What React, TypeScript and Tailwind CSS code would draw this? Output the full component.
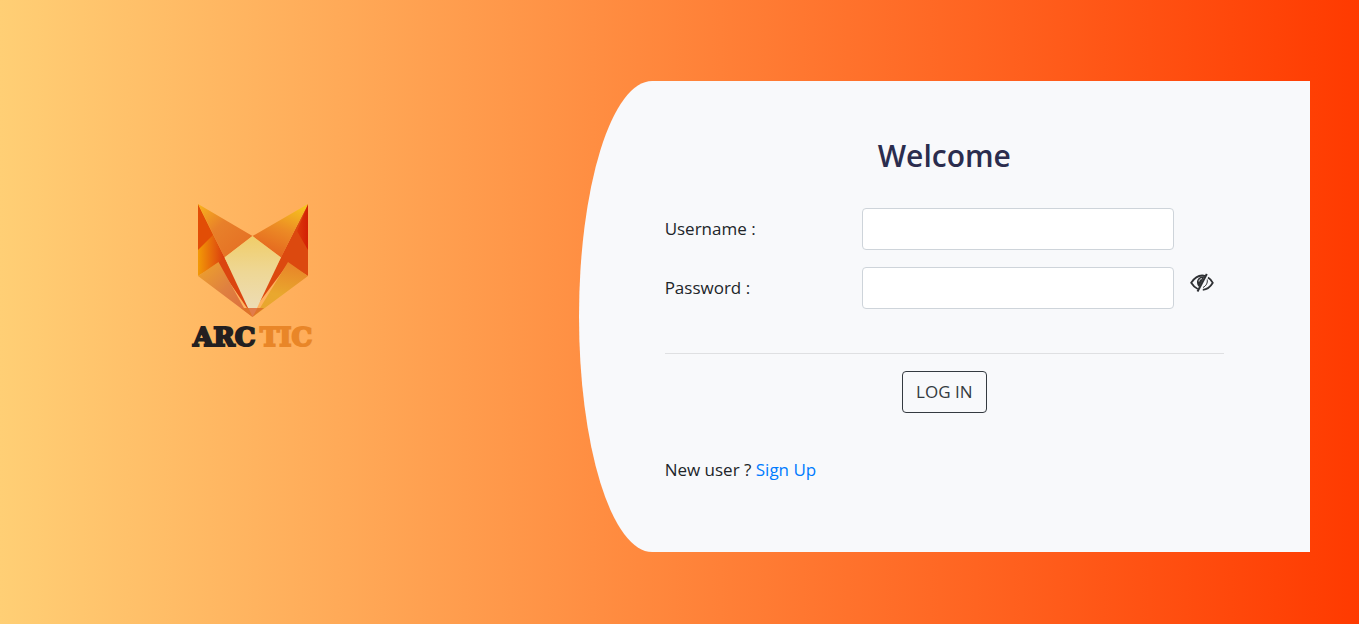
import { useState } from "react";

function FoxLogo() {
  return (
    <svg viewBox="-2 0 128 148" className="h-[148px] w-32" role="img" aria-label="Arctic">
      <defs>
        <linearGradient id="earLeft" x1="0" y1="0" x2="1" y2="1">
          <stop offset="0" stopColor="#f9b41c" />
          <stop offset="0.4" stopColor="#e8802a" />
          <stop offset="1" stopColor="#e46c22" />
        </linearGradient>
        <linearGradient id="earRight" x1="0.8" y1="0" x2="0.4" y2="1">
          <stop offset="0" stopColor="#f6c31e" />
          <stop offset="0.5" stopColor="#ec8a25" />
          <stop offset="1" stopColor="#e4641f" />
        </linearGradient>
        <linearGradient id="sideLeft" x1="0" y1="0" x2="1" y2="0">
          <stop offset="0" stopColor="#f39a06" />
          <stop offset="0.6" stopColor="#e4600c" />
          <stop offset="1" stopColor="#d93a0e" />
        </linearGradient>
        <linearGradient id="cheekLeft" x1="0" y1="0" x2="1" y2="1">
          <stop offset="0" stopColor="#efa52a" />
          <stop offset="0.5" stopColor="#df8040" />
          <stop offset="1" stopColor="#dc6a3c" />
        </linearGradient>
        <linearGradient id="cheekRight" x1="0.6" y1="0" x2="0.4" y2="1">
          <stop offset="0" stopColor="#e88428" />
          <stop offset="0.6" stopColor="#e9a82e" />
          <stop offset="1" stopColor="#e8a52e" />
        </linearGradient>
        <linearGradient id="face" x1="0" y1="0" x2="0" y2="1">
          <stop offset="0" stopColor="#f0cd68" />
          <stop offset="0.5" stopColor="#eed795" />
          <stop offset="1" stopColor="#eddcb4" />
        </linearGradient>
        <linearGradient id="redRight" x1="0" y1="0" x2="1" y2="0">
          <stop offset="0" stopColor="#dc3a0a" />
          <stop offset="1" stopColor="#d31f04" />
        </linearGradient>
      </defs>
      <path d="M7 0 34 54 27 60 7 72Z" fill="url(#sideLeft)" />
      <path d="M7 0 22 31 7 46Z" fill="#e24d06" />
      <path d="M7 0 61.500 32 33.500 53.500Z" fill="url(#earLeft)" />
      <path d="M33.500 53.500 26 60 56 104 60 104Z" fill="#db4510" />
      <path d="M7 72 27.500 58 53 104 61.500 113Z" fill="url(#cheekLeft)" />
      <path d="M117 0 90 53 64 104 97 60 117 72Z" fill="#dc490f" />
      <path d="M117 0 106 27 117 46Z" fill="url(#redRight)" />
      <path d="M117 0 61.500 32 90 53.500Z" fill="url(#earRight)" />
      <path d="M97 58 117 72 61.500 113 69 104Z" fill="url(#cheekRight)" />
      <path d="M61.500 32 90 53.500 66 104H57L33.500 53.500Z" fill="url(#face)" />
      <path d="M50 104H73L61.500 113Z" fill="#df7429" />
      <path d="M57.500 104H66.500L61.500 113Z" fill="#e27c4a" />
      <g fontFamily="'DejaVu Serif', serif" fontWeight="700" fontSize="26" strokeWidth="2">
        <text x="2" y="142" fill="#231f20" stroke="#231f20">
          ARC
        </text>
        <text x="69" y="142" fill="#e98628" stroke="#e98628">
          TIC
        </text>
      </g>
    </svg>
  );
}

function HiddenEyeIcon() {
  return (
    <svg viewBox="0 0 24 20" className="h-5 w-6" fill="none" stroke="#2f3134" aria-hidden="true">
      <path d="M15.500 3C8.500 1 4 5.500 1.200 9.800 3 12.800 5 14.800 7.800 16" strokeWidth="1.800" />
      <path d="M18 4.500C20.200 5.800 21.600 7.500 22.800 9.800 20.500 13.800 17 16.500 12.800 16.800" strokeWidth="1.800" />
      <path d="M14.500 3.200C9.500 2.800 6.800 6 7 9.500 7.100 11.800 8 13.200 9.200 14Z" fill="#2f3134" stroke="none" />
      <path d="M9 8.500C9.200 6.800 10.200 5.800 11.800 5.600" stroke="#f8f9fb" strokeWidth="1" />
      <path d="M16.800 1 7.500 18.500" strokeWidth="2" />
      <path d="M17.200 6.500C17.800 10 16.200 12.800 13 14.500" strokeWidth="1" />
    </svg>
  );
}

const inputClass =
  "h-[42px] w-full rounded border border-[#ced4da] bg-white px-3 text-[17px] text-[#495057] outline-none focus:border-[#80bdff]";

export default function App() {
  const [visible, setVisible] = useState(false);

  return (
    <main className="flex min-h-screen items-center justify-between bg-linear-to-r/srgb from-[#ffcf75] to-[#ff3a00] px-[49px] pt-[9px] font-['Open_Sans','Noto_Sans',sans-serif] text-[17px] leading-[26px] text-[#212529]">
      <div className="flex w-[32%] justify-center pb-[78px] pl-1">
        <FoxLogo />
      </div>
      <section className="w-[58%] rounded-l-[10%_50%] bg-[#f8f9fb] px-[86px] pt-[56px] pb-[69px]">
        <h1 className="text-center text-[30px] leading-[38px] font-semibold text-[#2b2d4e]">Welcome</h1>
        <form onSubmit={(event) => event.preventDefault()}>
          <div className="mt-[33px] grid grid-cols-[197px_1fr_50px] items-center gap-y-[17px]">
            <label htmlFor="username">Username :</label>
            <input id="username" type="text" className={inputClass} />
            <span />
            <label htmlFor="password">Password :</label>
            <input id="password" type={visible ? "text" : "password"} className={inputClass} />
            <button
              type="button"
              aria-label="Toggle password visibility"
              onClick={() => setVisible(!visible)}
              className="ml-4 self-start pt-[6px]"
            >
              <HiddenEyeIcon />
            </button>
          </div>
          <hr className="mt-11 border-[#dfe0e2]" />
          <div className="mt-[17px] flex justify-center">
            <button type="submit" className="h-[42px] rounded border border-[#343a40] px-[13px] text-[#343a40]">
              LOG IN
            </button>
          </div>
        </form>
        <p className="mt-11">
          New user ?{" "}
          <a href="#signup" className="text-[#007bff]">
            Sign Up
          </a>
        </p>
      </section>
    </main>
  );
}
